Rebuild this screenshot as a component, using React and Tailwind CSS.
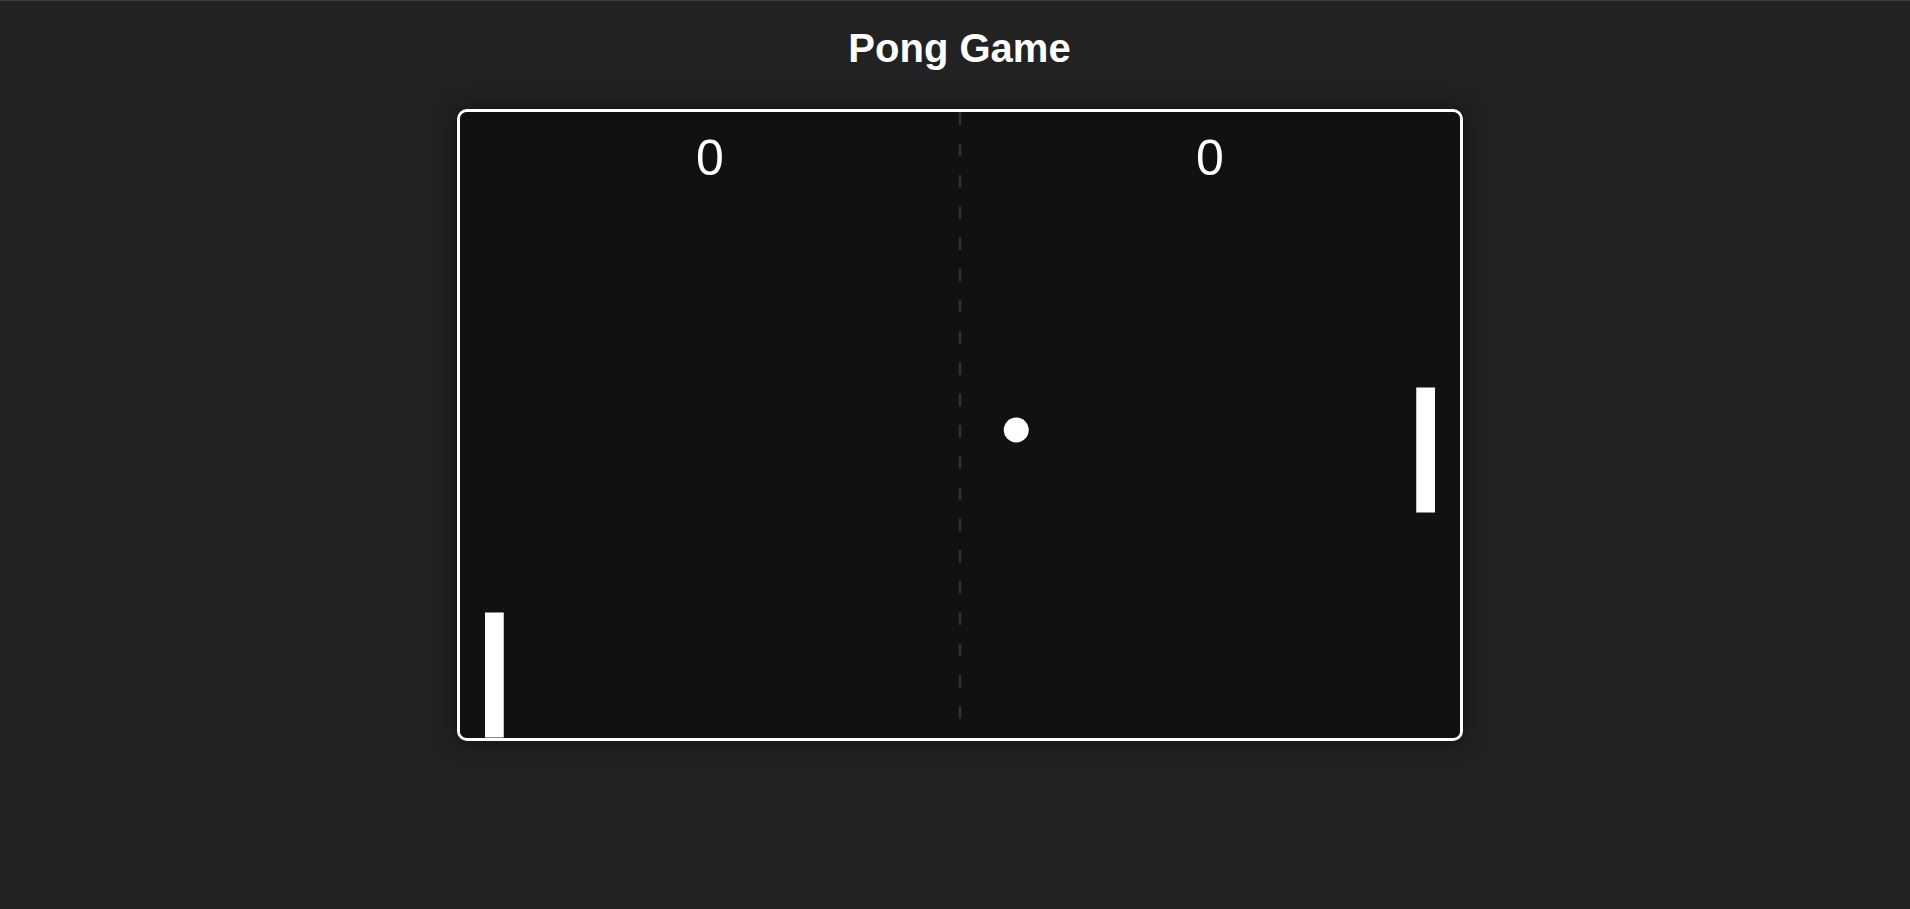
export default function App() {
  return (
    <div className="min-h-screen w-full bg-[#222222] border-t border-[#3a3d3a] pl-[9px] flex flex-col items-center font-['Liberation_Sans',Arial,sans-serif]">
      {/* Title */}
      <h1 className="pt-[27px] text-[40px] leading-[40px] font-bold text-white">Pong Game</h1>

      {/* Game board */}
      <div className="mt-[41px] w-[1006px] h-[632px] border-[3px] border-white rounded-[10px] bg-[#111111] overflow-hidden shadow-[0_0_25px_rgba(0,0,0,0.55)]">
        <svg viewBox="0 0 800 500" className="block w-[1000px] h-[626px]">
          <rect x="0" y="0" width="800" height="500" fill="#111111" />
          <line x1="400" y1="0" x2="400" y2="500" stroke="#333333" strokeWidth="2" strokeDasharray="10 15" />
          <text x="200" y="50" fill="#ffffff" fontSize="40" textAnchor="middle" fontFamily="'Liberation Sans', Arial, sans-serif">0</text>
          <text x="600" y="50" fill="#ffffff" fontSize="40" textAnchor="middle" fontFamily="'Liberation Sans', Arial, sans-serif">0</text>
          <rect x="20" y="400" width="15" height="100" fill="#ffffff" />
          <rect x="765" y="220" width="15" height="100" fill="#ffffff" />
          <circle cx="445" cy="254" r="10" fill="#ffffff" />
        </svg>
      </div>
    </div>
  )
}
